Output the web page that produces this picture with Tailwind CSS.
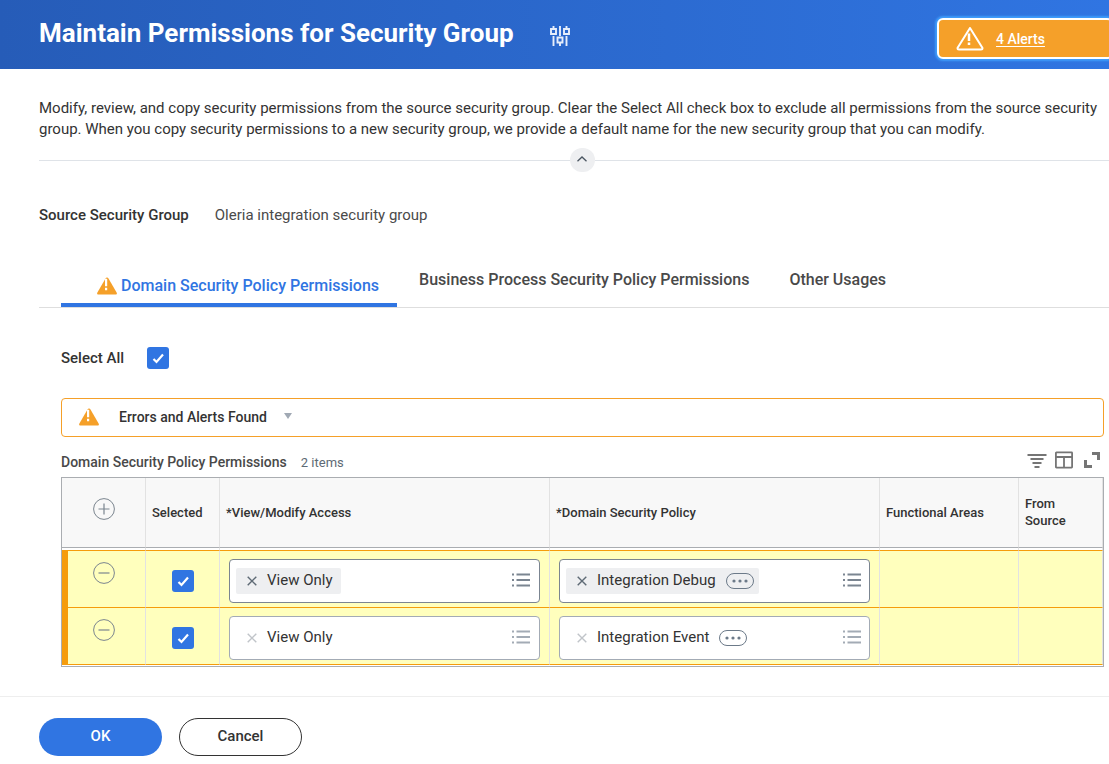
<!DOCTYPE html>
<html lang="en">
<head>
<meta charset="utf-8">
<meta name="viewport" content="width=device-width, initial-scale=1">
<title>Maintain Permissions for Security Group</title>
<script src="https://cdn.jsdelivr.net/npm/@tailwindcss/browser@4"></script>
</head>
<body class="min-h-screen overflow-x-hidden bg-white font-['Roboto',sans-serif] text-[15px] text-[#333333]">
<svg class="hidden" aria-hidden="true">
  <symbol id="warn" viewBox="0 0 20 18">
    <path d="M10 0.5 C10.7 0.5 11.1 0.9 11.5 1.5 L19.6 15.6 C20.2 16.8 19.8 17.5 18.6 17.5 H1.4 C0.2 17.5 -0.2 16.8 0.4 15.6 L8.500 1.500 C8.900 0.900 9.300 0.500 10 0.500Z" fill="#f5a029"/>
    <path d="M8 1.800h2.200v7.400H8z M8 10.800h2.200v2.400H8z" fill="#fff"/>
  </symbol>
  <symbol id="list" viewBox="0 0 18 14">
    <path d="M0 0.500h2v2H0z M0 6h2v2H0z M0 11.500h2v2H0z M4.500 0.500H18v2H4.500z M4.500 6H18v2H4.500z M4.500 11.500H18v2H4.500z" fill="currentColor"/>
  </symbol>
  <symbol id="x" viewBox="0 0 10 10">
    <path d="M0.700 0.700 L9.300 9.300 M9.300 0.700 L0.700 9.300" stroke="currentColor" stroke-width="1.400" fill="none"/>
  </symbol>
  <symbol id="dots" viewBox="0 0 28 16">
    <rect x="0.500" y="0.500" width="27" height="15" rx="7.500" fill="none" stroke="#6c7a89"/>
    <g fill="#6c7a89"><circle cx="8" cy="8" r="1.600"/><circle cx="14" cy="8" r="1.600"/><circle cx="20" cy="8" r="1.600"/></g>
  </symbol>
  <symbol id="minus" viewBox="0 0 22 22">
    <circle cx="11" cy="11" r="10.400" fill="none" stroke="#7b858f"/>
    <path d="M5.500 11h11" stroke="#7b858f" stroke-width="1.200"/>
  </symbol>
  <symbol id="tick" viewBox="0 0 22 22">
    <path d="M6.500 12 L9.500 15 L16 7.500" stroke="#fff" stroke-width="2.200" fill="none"/>
  </symbol>
</svg>

<header class="flex h-[69px] items-start justify-between bg-linear-to-r from-[#265cb8] to-[#3075e2] pl-[39px]">
  <div class="flex items-center gap-9 pt-[17px]">
    <h1 class="text-[26px] leading-8 font-bold whitespace-nowrap text-white">Maintain Permissions for Security Group</h1>
    <button type="button" aria-label="Configure" class="pt-1.5">
      <svg class="h-5 w-5" viewBox="0 0 20 20" fill="none" stroke="#e6eefb" stroke-width="1.900">
        <path d="M3.500 0v3 M3.500 10v10 M10 0v10 M10 17v3 M16.500 0v3 M16.500 10v10"/>
        <path d="M1 3h5v5H1z M7.500 11.500h5v5h-5z M14 3h5v5h-5z"/>
      </svg>
    </button>
  </div>
  <a href="#alerts" class="mt-[18px] -mr-1 flex h-[41px] w-[176px] shrink-0 items-center gap-3 rounded-md border-2 border-white bg-[#f5a029] pt-px pl-[17px] text-[14px] font-medium text-white underline underline-offset-2 shadow-[0_0_2px_2px_#3f9cfb]">
    <svg class="h-6 w-7" viewBox="0 0 28 24" fill="none" stroke="#fff" stroke-width="2" stroke-linejoin="round">
      <path d="M14 1 L26.500 21 Q26.500 22.500 25 22.500 H3 Q1.500 22.500 1.500 21Z"/>
      <path d="M13 6.500v7.500 M13 15.500v2.500" stroke-width="2.500"/>
    </svg>
    4 Alerts
  </a>
</header>

<main>
  <div class="-mr-4 pt-[29px] pl-[39px]">
    <p class="text-[15px] leading-[21px] whitespace-nowrap">Modify, review, and copy security permissions from the source security group. Clear the Select All check box to exclude all permissions from the source security<br>group. When you copy security permissions to a new security group, we provide a default name for the new security group that you can modify.</p>
    <div class="mt-2 flex items-center">
      <div class="h-px flex-1 bg-[#dfe3e8]"></div>
      <button type="button" aria-label="Collapse" class="flex h-6 w-[25px] items-center justify-center rounded-full bg-[#eeeff1]">
        <svg class="mb-0.5 h-1.5 w-2.5" viewBox="0 0 10 6" fill="none" stroke="#4a5561" stroke-width="1.300"><path d="M0.500 5.300 L5 1 L9.500 5.300"/></svg>
      </button>
      <div class="h-px flex-1 bg-[#dfe3e8]"></div>
    </div>
  </div>

  <dl class="flex items-center gap-[26px] pt-[33px] pl-[39px] leading-5">
    <dt class="font-medium">Source Security Group</dt>
    <dd class="text-[#4a4a4a]">Oleria integration security group</dd>
  </dl>

  <nav class="mt-11 ml-[39px] flex h-[39px] border-b border-[#dedede] pl-[22px] text-base font-medium text-[#494949]">
    <a href="#domain" aria-current="page" class="flex h-[38px] items-start gap-1 rounded-t-[4px] border-b-4 border-[#3075e2] pt-[7px] pr-[18px] pl-9 leading-5 text-[#3075e2]">
      <svg class="mt-px h-[18px] w-5"><use href="#warn"/></svg>Domain Security Policy Permissions</a>
    <a href="#business" class="px-[22px] pt-px leading-5">Business Process Security Policy Permissions</a>
    <a href="#other" class="px-[18px] pt-px leading-5">Other Usages</a>
  </nav>

  <section class="pr-[5px] pl-[61px]">
    <div class="flex items-center gap-[23px] pt-[39px]">
      <label for="all" class="font-medium">Select All</label>
      <span class="relative flex h-[22px] w-[22px]">
        <input id="all" type="checkbox" checked class="h-[22px] w-[22px] appearance-none rounded-[3px] bg-[#3075e2]">
        <svg class="pointer-events-none absolute inset-0 h-[22px] w-[22px]"><use href="#tick"/></svg>
      </span>
    </div>

    <button type="button" class="mt-7 flex h-[39px] w-full items-center rounded-[4px] border border-[#f5a029] pl-[17px] text-[14px] font-medium">
      <svg class="mr-5 h-[18px] w-5"><use href="#warn"/></svg>
      Errors and Alerts Found
      <svg class="mb-[3px] ml-[17px] h-1.5 w-2" viewBox="0 0 8 6"><path d="M0 0h8L4 6z" fill="#a1a9b4"/></svg>
    </button>

    <div class="flex h-10 items-center justify-between pt-3 pr-1">
      <div class="flex items-baseline gap-3.5">
        <h2 id="table-title" class="text-[14px] font-medium text-[#494949]">Domain Security Policy Permissions</h2>
        <span class="text-[13px] text-[#5e6a75]">2 items</span>
      </div>
      <div class="flex items-center gap-2 pb-1.5">
        <button type="button" aria-label="Filter"><svg class="h-[18px] w-5" viewBox="0 0 20 18" stroke="#757575" stroke-width="2"><path d="M0.500 4h19 M3.500 8h13 M5.500 12h9 M7.500 16h5"/></svg></button>
        <button type="button" aria-label="Columns"><svg class="h-[18px] w-[18px]" viewBox="0 0 18 18" fill="none" stroke="#757575" stroke-width="1.800"><rect x="0.900" y="1.400" width="16.200" height="15.200" rx="0.500"/><path d="M1 6h16 M9 6v11"/></svg></button>
        <button type="button" aria-label="Full screen" class="ml-[3px]"><svg class="h-[18px] w-4" viewBox="0 0 16 18" fill="none" stroke="#757575" stroke-width="3"><path d="M8 2.500h6.500v6.500 M1.500 9v6.500H8"/></svg></button>
      </div>
    </div>

    <div class="border border-[#aaadb1] pb-px">
      <table aria-labelledby="table-title" class="w-full table-fixed border-separate border-spacing-0 text-left text-[13px]">
        <colgroup><col class="w-[84px]"><col class="w-[74px]"><col><col><col class="w-[139px]"><col class="w-[84px]"></colgroup>
        <thead class="bg-[#f8f8f8]">
          <tr class="h-[70px] leading-[17px] *:border-r *:border-b *:border-r-[#e2e2e2] *:border-b-[#aaadb1] *:font-medium">
            <th class="pb-1.5"><button type="button" aria-label="Add row" class="mx-auto block"><svg class="h-[22px] w-[22px]" viewBox="0 0 22 22" fill="none" stroke="#7b858f"><circle cx="11" cy="11" r="10.400"/><path d="M5.500 11h11 M11 5.500v11" stroke-width="1.200"/></svg></button></th>
            <th class="pl-1.5">Selected</th>
            <th class="pl-1.5">*View/Modify Access</th>
            <th class="pl-1.5">*Domain Security Policy</th>
            <th class="pl-1.5">Functional Areas</th>
            <th class="pl-1.5">From<br>Source</th>
          </tr>
        </thead>
        <tbody>
          <tr class="*:h-[3px] *:border-r *:border-b *:border-r-[#e2e2e2] *:border-b-[#f59c0c] *:p-0" aria-hidden="true"><td></td><td></td><td></td><td></td><td></td><td></td></tr>
          <tr class="h-[57px] bg-[#ffffbd] *:border-r *:border-b *:border-r-[#e2e2e2] *:border-b-[#f59c0c]">
            <td class="border-l-6 border-l-[#f59c0c] pr-1.5 pb-3"><button type="button" aria-label="Remove row" class="mx-auto block"><svg class="h-[22px] w-[22px]"><use href="#minus"/></svg></button></td>
            <td><span class="relative mx-auto mt-1 flex h-[22px] w-[22px]"><input type="checkbox" checked aria-label="Selected" class="h-[22px] w-[22px] appearance-none rounded-[3px] bg-[#3075e2]"><svg class="pointer-events-none absolute inset-0 h-[22px] w-[22px]"><use href="#tick"/></svg></span></td>
            <td class="px-[9px] pt-1">
              <div class="flex h-11 items-center justify-between rounded-[4px] border border-[#7b8591] bg-white pr-[9px] pl-1.5 text-[15px]">
                <span class="flex h-[26px] items-center gap-2.5 rounded-[2px] bg-[#eeeff1] pr-2 pl-[11px]"><button type="button" aria-label="Remove View Only" class="text-[#5e6a75]"><svg class="h-2.5 w-2.5"><use href="#x"/></svg></button>View Only</span>
                <button type="button" aria-label="Choose access" class="pb-0.5 text-[#7b8591]"><svg class="h-3.5 w-[18px]"><use href="#list"/></svg></button>
              </div>
            </td>
            <td class="px-[9px] pt-1">
              <div class="flex h-11 items-center justify-between rounded-[4px] border border-[#7b8591] bg-white pr-2 pl-1.5 text-[15px]">
                <span class="flex h-[26px] items-center gap-2.5 rounded-[2px] bg-[#eeeff1] pr-[5px] pl-[11px]"><button type="button" aria-label="Remove Integration Debug" class="text-[#5e6a75]"><svg class="h-2.5 w-2.5"><use href="#x"/></svg></button>Integration Debug<button type="button" aria-label="Related actions"><svg class="h-4 w-7"><use href="#dots"/></svg></button></span>
                <button type="button" aria-label="Choose policy" class="pb-0.5 text-[#7b8591]"><svg class="h-3.5 w-[18px]"><use href="#list"/></svg></button>
              </div>
            </td>
            <td></td><td></td>
          </tr>
          <tr class="h-[57px] bg-[#ffffbd] *:border-r *:border-b *:border-r-[#e2e2e2] *:border-b-[#f59c0c]">
            <td class="border-l-6 border-l-[#f59c0c] pr-1.5 pb-3"><button type="button" aria-label="Remove row" class="mx-auto block"><svg class="h-[22px] w-[22px]"><use href="#minus"/></svg></button></td>
            <td><span class="relative mx-auto mt-1 flex h-[22px] w-[22px]"><input type="checkbox" checked aria-label="Selected" class="h-[22px] w-[22px] appearance-none rounded-[3px] bg-[#3075e2]"><svg class="pointer-events-none absolute inset-0 h-[22px] w-[22px]"><use href="#tick"/></svg></span></td>
            <td class="px-[9px] pt-1">
              <div class="flex h-11 items-center justify-between rounded-[4px] border border-[#a3abb5] bg-white pr-[9px] pl-1.5 text-[15px]">
                <span class="flex h-[26px] items-center gap-2.5 pr-2 pl-[11px]"><button type="button" aria-label="Remove View Only" class="text-[#c0c4c9]"><svg class="h-2.5 w-2.5"><use href="#x"/></svg></button>View Only</span>
                <button type="button" aria-label="Choose access" class="pb-0.5 text-[#a3abb5]"><svg class="h-3.5 w-[18px]"><use href="#list"/></svg></button>
              </div>
            </td>
            <td class="px-[9px] pt-1">
              <div class="flex h-11 items-center justify-between rounded-[4px] border border-[#a3abb5] bg-white pr-2 pl-1.5 text-[15px]">
                <span class="flex h-[26px] items-center gap-2.5 pr-[5px] pl-[11px]"><button type="button" aria-label="Remove Integration Event" class="text-[#c0c4c9]"><svg class="h-2.5 w-2.5"><use href="#x"/></svg></button>Integration Event<button type="button" aria-label="Related actions"><svg class="h-4 w-7"><use href="#dots"/></svg></button></span>
                <button type="button" aria-label="Choose policy" class="pb-0.5 text-[#a3abb5]"><svg class="h-3.5 w-[18px]"><use href="#list"/></svg></button>
              </div>
            </td>
            <td></td><td></td>
          </tr>
        </tbody>
      </table>
    </div>
  </section>
</main>

<footer class="mt-[29px] flex gap-[17px] border-t border-[#eeeeee] pt-[21px] pb-2 pl-[39px]">
  <button type="button" class="h-[38px] w-[123px] rounded-full bg-[#3075e2] font-medium text-white">OK</button>
  <button type="button" class="h-[38px] w-[123px] rounded-full border border-[#333333] font-medium">Cancel</button>
</footer>
</body>
</html>
